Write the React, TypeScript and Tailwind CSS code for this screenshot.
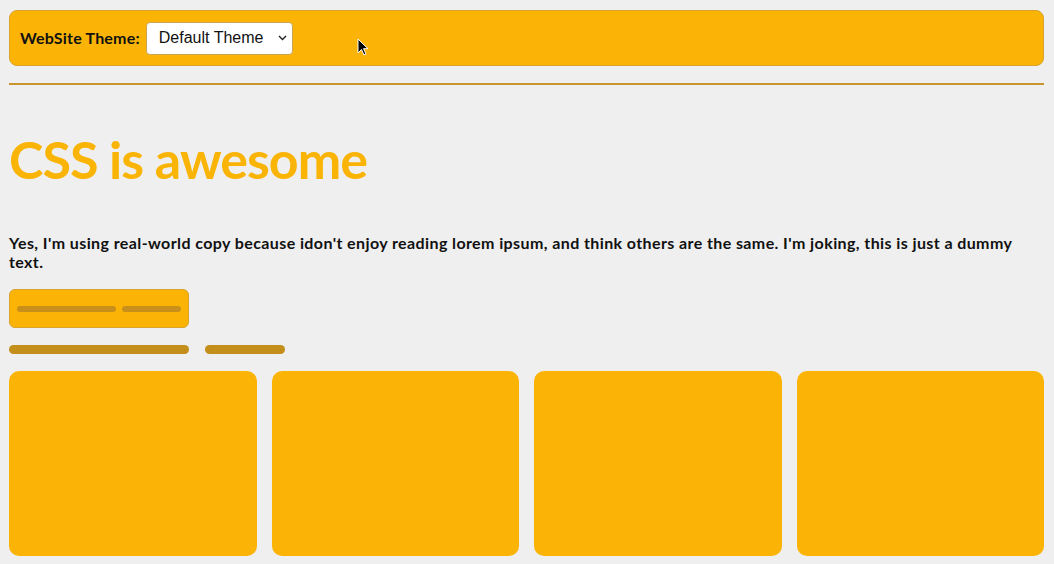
import React from 'react';

const cards = [1, 2, 3, 4];

const App = () => {
  return (
    <div className="min-h-[564px] bg-[#efefef] pt-[10px] pl-[9px] pr-[10px] font-['Lato',sans-serif] text-[#111]">
      <header className="relative flex h-[56px] items-center gap-[6px] rounded-lg border border-[#d9a22a] bg-[#fbb406] pl-[10px]">
        <label className="text-[16px] font-bold tracking-[0.2px]">WebSite Theme:</label>
        <div className="relative">
          <select
            defaultValue="default"
            className="h-[33px] w-[147px] appearance-none rounded-[4px] border border-[#c9a457] bg-white pl-[12px] pr-7 font-['Liberation_Sans',sans-serif] text-[16px] text-[#111]"
          >
            <option value="default">Default Theme</option>
            <option value="dark">Dark Theme</option>
          </select>
          <svg className="pointer-events-none absolute right-[6px] top-[13px]" width="9" height="6" viewBox="0 0 9 6">
            <path d="M1 1l3.5 3.5L8 1" fill="none" stroke="#222" strokeWidth="1.4" />
          </svg>
        </div>
        <svg className="absolute left-[347px] top-[27px]" width="12" height="18" viewBox="0 0 12 18">
          <path d="M1 1v14l3.5-3.5 2.5 5.5 2-1-2.5-5.3H11z" fill="#000" stroke="#fff" strokeWidth="1" />
        </svg>
      </header>

      <hr className="mt-[17px] border-0 border-t-2 border-[#c8952e]" />

      <h1 className="mt-[42px] text-[52px] leading-[64px] font-bold tracking-[-1px] text-[#f9b406]">CSS is awesome</h1>

      <p className="mt-[42px] text-[16px] leading-[19px] font-bold tracking-[0.4px]">
        Yes, I'm using real-world copy because idon't enjoy reading lorem ipsum, and think others are the same. I'm joking, this is just a dummy text.
      </p>

      <button className="mt-[18px] flex h-[39px] w-[180px] items-center gap-[6px] rounded-md border border-[#d9a22a] bg-[#fbb406] px-[7px]">
        <span className="h-[6px] w-[100px] rounded-full bg-[#c8901a]" />
        <span className="h-[6px] w-[59px] rounded-full bg-[#c8901a]" />
      </button>

      <div className="mt-[17px] flex gap-[16px]">
        <span className="h-[9px] w-[180px] rounded-full bg-[#c48e1a]" />
        <span className="h-[9px] w-[80px] rounded-full bg-[#c48e1a]" />
      </div>

      <div className="mt-[17px] grid grid-cols-4 gap-[15px]">
        {cards.map((c) => (
          <div key={c} className="h-[185px] rounded-[10px] bg-[#fbb406]" />
        ))}
      </div>
    </div>
  );
};

export default App;
